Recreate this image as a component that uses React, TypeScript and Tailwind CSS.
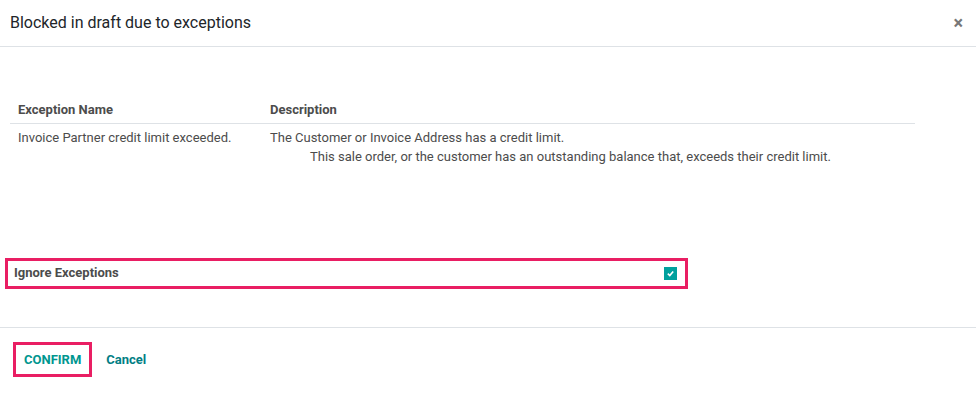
import { useState } from "react"

const exceptions = [
    {
        name: 'Invoice Partner credit limit exceeded.',
        first: 'The Customer or Invoice Address has a credit limit.',
        second: 'This sale order, or the customer has an outstanding balance that, exceeds their credit limit.',
    },
]

export default function App() {
    const [ignore, setIgnore] = useState(true)

    return (
        <div className="w-[976px] h-[394px] bg-white font-['Roboto',sans-serif] text-[13px] text-[#4c4c4c] flex flex-col">
            <header className="h-[47px] flex items-center justify-between pl-[10px] pr-[13px] border-b border-[#dee2e6]">
                <h1 className="text-[16px] text-[#212529] leading-none">Blocked in draft due to exceptions</h1>
                <button className="text-[#777] text-[18px] font-bold leading-none">×</button>
            </header>

            <main className="h-[281px] px-[10px] pt-[50px] border-b border-[#dee2e6]">
                <table className="w-[905px] border-collapse text-left">
                    <thead>
                        <tr className="h-[26px] border-b border-[#dee2e6]">
                            <th className="w-[252px] pl-[8px] font-bold">Exception Name</th>
                            <th className="pl-[8px] font-bold">Description</th>
                        </tr>
                    </thead>
                    <tbody>
                        {exceptions.map(exc => (
                            <tr key={exc.name} className="align-top">
                                <td className="pl-[8px] pt-[4px] leading-[19px]">{exc.name}</td>
                                <td className="pl-[8px] pt-[4px] leading-[19px]">
                                    <div>{exc.first}</div>
                                    <div className="pl-[40px]">{exc.second}</div>
                                </td>
                            </tr>
                        ))}
                    </tbody>
                </table>

                <div className="mt-[92px] -ml-[5px] w-[683px] h-[31px] border-[3px] border-[#e91e63] flex items-center justify-between pl-[6px] pr-[8px]">
                    <label htmlFor="ignore" className="font-bold text-[#4c4c4c]">Ignore Exceptions</label>
                    <button
                        id="ignore"
                        onClick={() => setIgnore(!ignore)}
                        className="w-[13px] h-[13px] bg-[#00a09d] flex items-center justify-center"
                    >
                        {ignore && (
                            <svg width="9" height="9" viewBox="0 0 10 10">
                                <path d="M2 5.2 L4.2 7.2 L8 2.8" fill="none" stroke="white" strokeWidth="1.8" />
                            </svg>
                        )}
                    </button>
                </div>
            </main>

            <footer className="flex items-start gap-[14px] pl-[13px] pt-[14px]">
                <button className="h-[35px] px-[8px] border-[3px] border-[#e91e63] font-bold text-[#00968f] uppercase">Confirm</button>
                <button className="h-[35px] font-bold text-[#017e84]">Cancel</button>
            </footer>
        </div>
    )
}
